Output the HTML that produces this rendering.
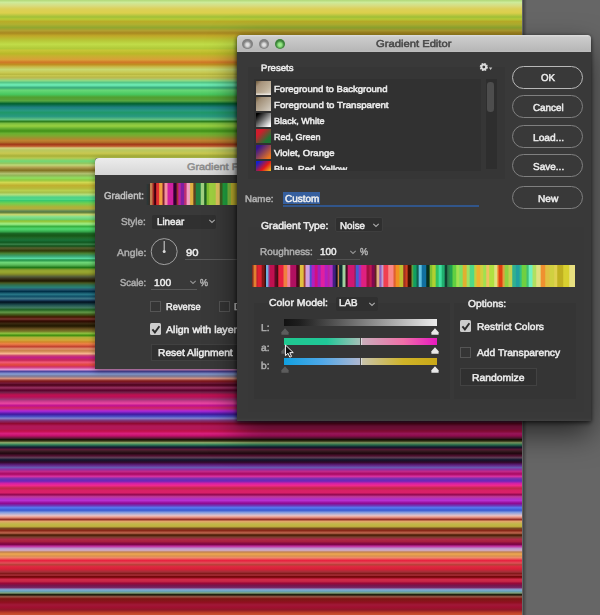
<!DOCTYPE html>
<html><head><meta charset="utf-8"><title>Gradient Editor</title>
<style>
html,body{margin:0;padding:0;}
body{width:600px;height:615px;overflow:hidden;background:#666666;position:relative;font-family:"Liberation Sans",sans-serif;}
.t{position:absolute;white-space:nowrap;line-height:1;transform-origin:0 50%;font-size:10px;-webkit-text-stroke:0.5px currentColor;text-rendering:geometricPrecision;}
#ui{position:absolute;left:0;top:0;width:600px;height:615px;filter:blur(0.5px);}
.abs{position:absolute;}
#stripes{position:absolute;left:0;top:0;width:522.4px;height:615px;background:linear-gradient(to bottom,#b0d878 0px,#cdeb9a 2.4px,#d8dc80 5.7px,#dcd058 9px,#dcd04c 13px,#a0c038 17px,#b8cc38 19px,#b8ac28 21.5px,#b0b030 24.4px,#90a830 27.6px,#b0a030 30.5px,#a88820 33px,#c0a828 35.8px,#b8c838 40.6px,#c0dc48 44.3px,#b0c838 48.8px,#c8c838 50px,#b8b828 53.7px,#c8b030 56px,#d8a038 59.8px,#d07828 62.2px,#c09020 64.6px,#c8b848 66.7px,#c8d870 69.5px,#c8c850 72.8px,#b8b840 74.4px,#c8c850 75.6px,#b8b848 77.2px,#b8c060 78.5px,#90d880 80.5px,#58c888 82.5px,#70f0b8 85px,#38a878 87.8px,#68d878 90.2px,#48c860 94.3px,#50a030 97.2px,#58a038 99.6px,#58a840 100.8px,#006030 103.7px,#208080 107.3px,#289880 110.6px,#209868 112.6px,#289880 116.3px,#60c080 119.5px,#308020 121.5px,#80c040 123.6px,#98d040 126px,#68b030 128.5px,#409018 131px,#68b030 133.3px,#80a830 135.8px,#a09030 138.2px,#c08030 140.7px,#b07028 142.3px,#a03818 144.3px,#c06030 146.3px,#d8d080 148px,#b8c860 150px,#c8c850 153.3px,#a8b038 156px,#b8c850 158px,#70d878 161px,#90c860 163.4px,#c0d878 165px,#b0a050 167.5px,#807020 170.3px,#b0c070 173.6px,#90b858 175.6px,#90e060 178px,#90c840 180px,#d0d850 182.5px,#c0b030 185.4px,#b8b838 188.2px,#b8d050 190.6px,#a8c048 192.3px,#b0e080 194.7px,#50d088 197.2px,#50d888 199.6px,#38c870 200.5px,#70d050 203.3px,#b0b038 207px,#b0b040 209px,#608858 211px,#587838 212.2px,#c8d870 214.6px,#80e090 217px,#68d070 219.5px,#90c030 221px,#a0f088 224px,#38b040 226.4px,#50d870 228.9px,#38b050 231.3px,#186020 233.7px,#185818 235.8px,#206828 237.8px,#187038 240.2px,#105820 242.3px,#388048 244.3px,#105018 246px,#586030 248px,#303808 250.8px,#488030 253.3px,#38a070 256px,#58d8a0 258.5px,#209048 260px,#70d878 262.6px,#58b858 265px,#207818 267.5px,#90a030 270px,#98a830 272px,#889028 274px,#505838 276.8px,#383018 278.9px,#201800 281px,#485820 283px,#307050 285px,#288078 287.4px,#285870 289.4px,#003048 291.5px,#287888 294.3px,#105068 296.3px,#407888 298.8px,#204868 300px,#001020 302px,#205050 305px,#407860 307.7px,#206020 309.8px,#609848 312.2px,#405818 314.6px,#401800 317px,#783830 319px,#300800 321px,#382810 323.6px,#201800 326px,#685020 328.9px,#787828 331.3px,#90c040 333.3px,#409010 335.4px,#b0b038 337.4px,#d0a838 340.2px,#d08828 341.9px,#f08048 343.9px,#c04030 346.7px,#e09070 348.8px,#c88048 350.8px,#f8b890 353.7px,#c84070 355.7px,#c02088 357.3px,#c82858 360.2px,#f05878 362.2px,#e04838 365px,#d03070 367px,#e090d0 369.5px,#5048a0 371.5px,#88a0d8 374px,#787898 376px,#d09080 378.5px,#801818 381px,#701838 383.3px,#480018 385px,#983060 387.8px,#580028 390.2px,#702048 392.3px,#c01050 395px,#b81058 397px,#a03878 399.6px,#c03888 400.8px,#e848a0 403.3px,#c01090 405.7px,#d02860 408px,#b028d8 411px,#4018a0 414.2px,#4848c0 416.3px,#8080d0 418.3px,#803070 420.7px,#900830 423.6px,#b01858 426px,#b01858 428.9px,#c01048 431px,#d82080 433.7px,#c01068 435.8px,#601838 438.2px,#101000 439.8px,#505028 441.4px,#90b070 442.7px,#308058 444.7px,#101830 447.2px,#601838 449.6px,#402028 450.8px,#200810 453.3px,#501030 455.7px,#604058 457.7px,#101830 459.8px,#300828 462.2px,#602080 465px,#6858b0 467.5px,#9030a0 469.5px,#c02888 471.5px,#a80860 474px,#d830a0 476.4px,#7030b0 478.9px,#6828b8 481px,#d020a8 483.3px,#f02890 485.4px,#c02848 488.2px,#d82068 490.7px,#d82068 492.7px,#900850 494.7px,#c03898 496.7px,#b030c8 499.2px,#b830d0 500.5px,#900890 503.3px,#7030b0 505.3px,#5878f0 507.7px,#3858d0 510.2px,#88a0e0 512.6px,#e0c0c8 515.4px,#f0a090 517px,#983028 519.5px,#e0a868 521.5px,#c0b848 524px,#c0b040 526.4px,#784820 528.5px,#882818 530.5px,#c06850 533px,#401800 535px,#784030 537px,#b02848 539.4px,#a82040 541.5px,#780040 544.3px,#c030a0 546.3px,#c0a0d0 548.8px,#d0a8c0 550.4px,#c08050 552px,#f0a850 554px,#d89050 556px,#f08868 557.7px,#e82040 560.6px,#e05058 563px,#b84038 564.6px,#e02840 566.7px,#d82038 569px,#a03038 572px,#801818 573.6px,#a83038 575.2px,#680000 576.8px,#d02848 579.3px,#c82848 581.3px,#980838 583.3px,#701850 585.8px,#7a2868 587.8px,#8c8cc4 589px,#78a8d0 590.3px,#68a0b0 591.5px,#80a078 593px,#101000 594.7px,#985848 596.7px,#801010 598.8px,#801818 600px,#901020 602.4px,#a01838 604.8px,#a01030 607.3px,#901828 610px,#c04028 613px,#c85030 615px);}
</style></head><body>
<div id="stripes"></div>
<div class="abs" style="left:522.5px;top:0;width:4px;height:615px;background:linear-gradient(to right,rgba(0,0,0,.35),rgba(0,0,0,0));"></div>

<div id="ui">
<div class="abs" style="left:94.5px;top:157.7px;width:200px;height:211.4px;background:#393939;box-shadow:0 2px 6px rgba(0,0,0,.4);border-radius:3px 3px 0 0;">
<div class="abs" style="left:0;top:0;width:100%;height:17px;background:linear-gradient(#ececec,#d6d6d6);border-radius:4px 4px 0 0;"></div>
</div>
<div class="" style="position:absolute;left:145.6px;top:183.6px;width:4.2px;height:21.8px;background:linear-gradient(to right,rgba(40,52,52,0),#2a3636 40%,#3a2c24);"></div>
<div class="" style="position:absolute;left:149.7px;top:183.4px;width:88px;height:22px;background:linear-gradient(to right,#c08050 0.4px,#c08050 1.9px,#a02020 3.1px,#a02020 3.5px,#400010 4.7px,#400010 5.5px,#e03030 6.7px,#e03030 8.5px,#f0a040 9.7px,#f0a040 11.9px,#802030 13.1px,#802030 13.9px,#f090a0 15.1px,#f090a0 16.9px,#d020a0 18.1px,#d020a0 22.7px,#300030 23.9px,#300030 26.0px,#a03030 27.2px,#a03030 27.7px,#c020a0 28.9px,#c020a0 30.2px,#8020a0 31.4px,#8020a0 33.5px,#c03070 34.7px,#c03070 36.0px,#f0a0c0 37.2px,#f0a0c0 39.4px,#e0b040 40.6px,#e0b040 42.7px,#604020 43.9px,#604020 45.2px,#208040 46.4px,#208040 50.2px,#a0d080 51.4px,#a0d080 53.5px,#206020 54.7px,#206020 56.0px,#80c030 57.2px,#80c030 58.5px,#a0d040 59.7px,#a0d040 65.2px,#e0c060 66.4px,#e0c060 69.2px,#406020 70.4px,#406020 71.9px,#20a040 73.1px,#20a040 76.9px,#80c040 78.1px,#80c040 80.2px,#c8b830 81.4px,#c8b830 86.9px);"></div>
<div class="" style="position:absolute;left:151.5px;top:214.5px;width:64px;height:14px;background:#303030;border-radius:2px;"></div>
<svg class="abs" style="left:207px;top:217px" width="10" height="8" viewBox="0 0 10 8"><path d="M2.3 2.9 L5 5.5 L7.7 2.9" stroke="#aaaaaa" stroke-width="1.15" fill="none"/></svg>
<svg class="abs" style="left:149px;top:236px" width="32" height="32" viewBox="0 0 32 32"><circle cx="15.2" cy="15.6" r="13" fill="none" stroke="#a0a0a0" stroke-width="1"/><path d="M15.2 15.6 L15.2 5" stroke="#c8c8c8" stroke-width="1.1"/><circle cx="15.2" cy="15.6" r="1.5" fill="#d8d8d8"/></svg>
<div class="" style="position:absolute;left:185px;top:259px;width:60px;height:1px;background:#5a5a5a;"></div>
<div class="" style="position:absolute;left:151px;top:288.5px;width:46px;height:1px;background:#5a5a5a;"></div>
<svg class="abs" style="left:188px;top:278px" width="10" height="8" viewBox="0 0 10 8"><path d="M2.3 2.9 L5 5.5 L7.7 2.9" stroke="#949494" stroke-width="1.15" fill="none"/></svg>
<div class="" style="position:absolute;left:150px;top:300.6px;width:9px;height:9.2px;border:1px solid #555555;background:#353535;"></div>
<div class="" style="position:absolute;left:218.5px;top:300.6px;width:9px;height:9.2px;border:1px solid #555555;background:#353535;"></div>
<div class="" style="position:absolute;left:149.8px;top:323.4px;width:11.4px;height:11.6px;background:#cdcdcd;border-radius:1.5px;"></div>
<svg class="abs" style="left:150px;top:323.5px" width="12" height="12" viewBox="0 0 12 12"><path d="M2.4 5.4 L4.9 8.4 L9.4 2.3" stroke="#2c2c2c" stroke-width="1.9" fill="none"/></svg>
<div class="" style="position:absolute;left:151px;top:344.3px;width:100px;height:17px;background:#303030;border:1px solid #414141;box-sizing:border-box;"></div>
<span class="t" style="left:186.9px;top:162.68px;font-size:9.6px;color:#8c8c8c;transform:scaleX(1.131)">Gradient Fill</span>
<span class="t" style="left:103.7px;top:192.44px;font-size:10px;color:#c0c0c0;transform:scaleX(0.972)">Gradient:</span>
<span class="t" style="left:121.0px;top:218.04px;font-size:10px;color:#adadad;transform:scaleX(0.991)">Style:</span>
<span class="t" style="left:157.0px;top:218.04px;font-size:10px;color:#ececec;transform:scaleX(0.978)">Linear</span>
<span class="t" style="left:116.5px;top:248.74px;font-size:10px;color:#adadad;transform:scaleX(1.033)">Angle:</span>
<span class="t" style="left:185.8px;top:248.74px;font-size:10px;color:#ececec;transform:scaleX(1.124)">90</span>
<span class="t" style="left:119.7px;top:279.44px;font-size:10px;color:#adadad;transform:scaleX(0.939)">Scale:</span>
<span class="t" style="left:153.8px;top:279.44px;font-size:10px;color:#ececec;transform:scaleX(1.025)">100</span>
<span class="t" style="left:200.2px;top:279.44px;font-size:10px;color:#adadad;transform:scaleX(0.898)">%</span>
<span class="t" style="left:165.8px;top:302.64px;font-size:10px;color:#ececec;transform:scaleX(0.932)">Reverse</span>
<span class="t" style="left:233.8px;top:302.64px;font-size:10px;color:#ececec;transform:scaleX(1.049)">Dither</span>
<span class="t" style="left:165.8px;top:325.84px;font-size:10px;color:#ececec;transform:scaleX(1.056)">Align with layer</span>
<span class="t" style="left:158.3px;top:349.04px;font-size:10px;color:#ececec;transform:scaleX(1.026)">Reset Alignment</span>
<div class="abs" style="left:237.4px;top:34.7px;width:354px;height:386.2px;background:#393939;box-shadow:0 13px 30px rgba(0,0,0,.6),0 1px 4px rgba(0,0,0,.6),-1px 3px 5px rgba(0,0,0,.25);border-radius:4px 4px 0 0;"></div>
<div class="" style="position:absolute;left:237.4px;top:34.7px;width:354px;height:17px;background:linear-gradient(#dedede 0,#cbcbcb 14%,#b8b8b8 88%,#bebebe 100%);border-radius:3.5px 3.5px 0 0;"></div>
<div class="" style="position:absolute;left:242.3px;top:38.5px;width:10.4px;height:10.4px;border-radius:50%;background:radial-gradient(circle at 50% 58%,#e6e6e6 0,#dadada 20%,#858585 48%,#7e7e7e 72%,#a0a0a0 90%,#bcbcbc 100%);"></div>
<div class="" style="position:absolute;left:258.8px;top:38.5px;width:10.4px;height:10.4px;border-radius:50%;background:radial-gradient(circle at 50% 58%,#e6e6e6 0,#dadada 20%,#858585 48%,#7e7e7e 72%,#a0a0a0 90%,#bcbcbc 100%);"></div>
<div class="" style="position:absolute;left:274.8px;top:38.5px;width:10.4px;height:10.4px;border-radius:50%;background:radial-gradient(circle at 50% 58%,#a0f090 0,#8ee07e 24%,#3c843a 52%,#3a8038 74%,#7ca07a 91%,#aabcaa 100%);"></div>
<div class="" style="position:absolute;left:248px;top:67px;width:257px;height:112px;background:#363636;"></div>
<div class="" style="position:absolute;left:253.7px;top:79px;width:243.3px;height:92.3px;background:#313131;"></div>
<div class="" style="position:absolute;left:481px;top:79px;width:16px;height:92.3px;background:#363636;"></div>
<div class="" style="position:absolute;left:485.5px;top:79px;width:11.5px;height:90px;background:#2e2e2e;"></div>
<div class="" style="position:absolute;left:487.4px;top:81.7px;width:7px;height:30px;background:#4d4d4d;border-radius:3.2px;"></div>
<svg class="abs" style="left:478px;top:61px" width="18" height="12" viewBox="0 0 18 12"><circle cx="5.8" cy="6" r="2.9" fill="none" stroke="#dcdcdc" stroke-width="2.3" stroke-dasharray="1.5 0.78"/><circle cx="5.8" cy="6" r="2.3" fill="none" stroke="#dcdcdc" stroke-width="1.7"/><path d="M10.9 6.6 L14.3 6.6 L12.6 9 Z" fill="#c4c4c4"/></svg>
<div class="" style="position:absolute;left:256.1px;top:80.8px;width:15px;height:14.6px;background:linear-gradient(to bottom,rgba(255,255,255,0) 78%,rgba(255,255,255,.55) 92%),linear-gradient(135deg,#6c5838 0%,#a6927a 22%,#c0b29c 64%,#dcd4c8 100%);background-size:15px 14.6px;"></div>
<div class="" style="position:absolute;left:256.1px;top:96.8px;width:15px;height:14.6px;background:linear-gradient(135deg,#6c5838 0%,#a08e76 22%,#bcb09e 62%,#d8d2c8 100%);background-size:15px 14.6px;"></div>
<div class="" style="position:absolute;left:256.1px;top:112.8px;width:15px;height:14.6px;background:linear-gradient(135deg,#000 10%,#fff 90%);background-size:15px 14.6px;"></div>
<div class="" style="position:absolute;left:256.1px;top:128.8px;width:15px;height:14.6px;background:linear-gradient(135deg,#d01c2c 25%,#207434 75%);background-size:15px 14.6px;"></div>
<div class="" style="position:absolute;left:256.1px;top:144.8px;width:15px;height:14.6px;background:linear-gradient(135deg,#34148c 15%,#e87420 85%);background-size:15px 14.6px;"></div>
<div class="" style="position:absolute;left:256.1px;top:160.8px;width:15px;height:9.8px;background:linear-gradient(135deg,#1020d0 10%,#e01818 50%,#f0e020 90%);background-size:15px 14.6px;"></div>
<div class="" style="position:absolute;left:237.4px;top:418px;width:354px;height:2.9px;background:linear-gradient(rgba(255,255,255,0),rgba(255,255,255,.035));"></div>
<div class="" style="position:absolute;left:248px;top:227px;width:336px;height:185px;background:#383838;"></div>
<div class="" style="position:absolute;left:254px;top:303px;width:195.6px;height:95.5px;background:#353535;"></div>
<div class="" style="position:absolute;left:454.2px;top:303px;width:122px;height:95.5px;background:#353535;"></div>
<div class="" style="position:absolute;left:283px;top:192.2px;width:37px;height:11.8px;background:#365f9e;"></div>
<div class="" style="position:absolute;left:283px;top:205.4px;width:196px;height:1.4px;background:#31558a;"></div>
<div class="" style="position:absolute;left:335.3px;top:216.8px;width:47.5px;height:14.8px;background:#2f2f2f;border:1px solid #3e3e3e;box-sizing:border-box;border-radius:2px;"></div>
<svg class="abs" style="left:371px;top:221px" width="10" height="8" viewBox="0 0 10 8"><path d="M2.3 2.9 L5 5.5 L7.7 2.9" stroke="#aaaaaa" stroke-width="1.15" fill="none"/></svg>
<div class="" style="position:absolute;left:317px;top:258.8px;width:43px;height:1.4px;background:#525252;"></div>
<svg class="abs" style="left:348px;top:248px" width="10" height="8" viewBox="0 0 10 8"><path d="M2.3 2.9 L5 5.5 L7.7 2.9" stroke="#949494" stroke-width="1.15" fill="none"/></svg>
<div class="" style="position:absolute;left:252.3px;top:264.8px;width:322.9px;height:22.7px;background:linear-gradient(to right,#803020 0.5px,#803020 1.0px,#e08030 2.1px,#e08030 3.9px,#c02030 4.9px,#c02030 5.3px,#e02030 6.3px,#e02030 9.1px,#801818 10.3px,#801818 12.1px,#301010 13.1px,#301010 13.5px,#70b0e0 14.5px,#70b0e0 15.9px,#a03080 16.9px,#a03080 17.3px,#c01050 18.3px,#c01050 21.9px,#600828 23.1px,#600828 24.1px,#401010 25.2px,#401010 25.7px,#e82040 26.8px,#e82040 30.9px,#f08040 32.1px,#f08040 34.6px,#f080a0 35.8px,#f080a0 37.6px,#b01060 38.8px,#b01060 43.6px,#500020 44.8px,#500020 45.9px,#402010 46.9px,#402010 47.3px,#e0c040 48.3px,#e0c040 51.1px,#a04030 52.3px,#a04030 52.9px,#d0a0e0 54.1px,#d0a0e0 57.1px,#5050d0 58.3px,#5050d0 59.1px,#b020c0 60.3px,#b020c0 62.1px,#d01080 63.3px,#d01080 65.1px,#a020c0 66.3px,#a020c0 68.1px,#e020a0 69.3px,#e020a0 72.1px,#b020c0 73.3px,#b020c0 75.1px,#c020a0 76.3px,#c020a0 77.1px,#b030c0 78.3px,#b030c0 80.1px,#402080 81.3px,#402080 83.1px,#101020 84.3px,#101020 85.1px,#c08040 86.2px,#c08040 86.5px,#103030 87.6px,#103030 89.9px,#a0d0a0 91.1px,#a0d0a0 92.9px,#401020 94.1px,#401020 95.1px,#d01870 96.3px,#d01870 101.9px,#902060 102.9px,#902060 103.3px,#4060d0 104.3px,#4060d0 106.1px,#a030c0 107.3px,#a030c0 108.6px,#e02080 109.8px,#e02080 113.9px,#a01040 115.1px,#a01040 116.9px,#c01850 118.1px,#c01850 119.1px,#800850 120.3px,#800850 122.1px,#602020 123.3px,#602020 123.9px,#e0b080 125.1px,#e0b080 126.6px,#9060c0 127.8px,#9060c0 128.9px,#c0a0d0 130.1px,#c0a0d0 130.8px,#f04050 132.0px,#f04050 135.6px,#f88888 136.8px,#f88888 140.9px,#e06030 142.1px,#e06030 143.1px,#f09020 144.3px,#f09020 146.9px,#c0c030 148.1px,#c0c030 150.6px,#a03020 151.8px,#a03020 152.9px,#d04020 154.1px,#d04020 155.1px,#401000 156.3px,#401000 158.9px,#60a040 160.1px,#60a040 160.6px,#10a060 161.8px,#10a060 163.9px,#106050 165.1px,#106050 166.1px,#60c0e0 167.3px,#60c0e0 169.1px,#1070a0 170.3px,#1070a0 173.6px,#083020 174.8px,#083020 177.1px,#80c030 178.3px,#80c030 179.6px,#b0d030 180.8px,#b0d030 183.1px,#30c060 184.3px,#30c060 186.1px,#40e0a0 187.3px,#40e0a0 189.1px,#20b070 190.3px,#20b070 192.1px,#104030 193.3px,#104030 194.6px,#308050 195.8px,#308050 196.9px,#20a050 198.1px,#20a050 199.9px,#60d040 201.1px,#60d040 203.6px,#a0e050 204.8px,#a0e050 206.6px,#80e060 207.8px,#80e060 210.1px,#e0b030 211.3px,#e0b030 214.1px,#a0e060 215.3px,#a0e060 217.1px,#50d888 218.3px,#50d888 221.6px,#c0d040 222.8px,#c0d040 223.9px,#f0b030 225.1px,#f0b030 227.6px,#d0d040 228.8px,#d0d040 230.6px,#a0e050 231.8px,#a0e050 233.6px,#f0c060 234.8px,#f0c060 236.6px,#b0e040 237.8px,#b0e040 241.6px,#e0e080 242.8px,#e0e080 244.6px,#f0a040 245.6px,#f0a040 246.0px,#e04010 247.0px,#e04010 249.9px,#e0a040 251.1px,#e0a040 252.1px,#90d040 253.3px,#90d040 255.9px,#c0d050 257.1px,#c0d050 259.6px,#30b090 260.8px,#30b090 263.3px,#20a0a0 264.5px,#20a0a0 267.1px,#30c080 268.3px,#30c080 269.1px,#70d040 270.3px,#70d040 273.9px,#40c070 275.1px,#40c070 276.1px,#70f0c0 277.3px,#70f0c0 279.9px,#b0e060 281.1px,#b0e060 283.6px,#e0e080 284.8px,#e0e080 288.1px,#f09030 289.3px,#f09030 292.6px,#e0c040 293.8px,#e0c040 297.1px,#d0d040 298.3px,#d0d040 301.6px,#e0d050 302.8px,#e0d050 304.6px,#c0b020 305.8px,#c0b020 310.6px,#d8d030 311.8px,#d8d030 316.6px,#e8e080 317.8px,#e8e080 322.1px);"></div>
<div class="" style="position:absolute;left:335.5px;top:296.5px;width:42px;height:14px;background:#303030;border-radius:2px;"></div>
<svg class="abs" style="left:367px;top:300px" width="10" height="8" viewBox="0 0 10 8"><path d="M2.3 2.9 L5 5.5 L7.7 2.9" stroke="#aaaaaa" stroke-width="1.15" fill="none"/></svg>
<div class="" style="position:absolute;left:284.3px;top:319.4px;width:152.7px;height:6.8px;background:linear-gradient(to right,#121212 0,#1e1e1e 10%,#7a7a7a 50%,#ececec 100%);"></div>
<div class="" style="position:absolute;left:284.3px;top:338.1px;width:152.7px;height:7.1px;background:linear-gradient(to right,#20c890 0,#20c898 28%,#a8c0b8 50%,#c8b0bc 50.2%,#f070a8 78%,#e818c0 100%);"></div>
<div class="" style="position:absolute;left:284.3px;top:357.6px;width:152.7px;height:7px;background:linear-gradient(to right,#10a0e0 0,#50a8e8 25%,#b0b8d0 50%,#c8c4b0 50.2%,#d0b428 78%,#c8a818 100%);"></div>
<div class="" style="position:absolute;left:360.3px;top:338.1px;width:0.8px;height:7.1px;background:#505050;"></div>
<div class="" style="position:absolute;left:361.1px;top:338.1px;width:1px;height:7.1px;background:#dcdcdc;"></div>
<div class="" style="position:absolute;left:360.3px;top:357.6px;width:0.8px;height:7.1px;background:#505050;"></div>
<div class="" style="position:absolute;left:361.1px;top:357.6px;width:1px;height:7.1px;background:#dcdcdc;"></div>
<svg class="abs" style="left:280.3px;top:327.8px" width="10" height="8" viewBox="0 0 10 8"><path d="M5 0.3 L8.6 4.2 L8.6 6.8 L1.4 6.8 L1.4 4.2 Z" fill="#5c5c5c"/></svg>
<svg class="abs" style="left:430px;top:327.8px" width="10" height="8" viewBox="0 0 10 8"><path d="M5 0.3 L8.6 4.2 L8.6 6.8 L1.4 6.8 L1.4 4.2 Z" fill="#e8e8e8"/></svg>
<svg class="abs" style="left:280.3px;top:346.8px" width="10" height="8" viewBox="0 0 10 8"><path d="M5 0.3 L8.6 4.2 L8.6 6.8 L1.4 6.8 L1.4 4.2 Z" fill="#5c5c5c"/></svg>
<svg class="abs" style="left:430px;top:346.8px" width="10" height="8" viewBox="0 0 10 8"><path d="M5 0.3 L8.6 4.2 L8.6 6.8 L1.4 6.8 L1.4 4.2 Z" fill="#e8e8e8"/></svg>
<svg class="abs" style="left:280.3px;top:366.2px" width="10" height="8" viewBox="0 0 10 8"><path d="M5 0.3 L8.6 4.2 L8.6 6.8 L1.4 6.8 L1.4 4.2 Z" fill="#5c5c5c"/></svg>
<svg class="abs" style="left:430px;top:366.2px" width="10" height="8" viewBox="0 0 10 8"><path d="M5 0.3 L8.6 4.2 L8.6 6.8 L1.4 6.8 L1.4 4.2 Z" fill="#e8e8e8"/></svg>
<div class="" style="position:absolute;left:459.8px;top:320.3px;width:11.6px;height:11.5px;background:#cdcdcd;border-radius:1.5px;"></div>
<svg class="abs" style="left:460px;top:320.5px" width="12" height="12" viewBox="0 0 12 12"><path d="M2.4 5.4 L4.9 8.4 L9.4 2.3" stroke="#2c2c2c" stroke-width="1.9" fill="none"/></svg>
<div class="" style="position:absolute;left:460px;top:346.8px;width:9px;height:9.2px;border:1px solid #555555;background:#353535;"></div>
<div class="" style="position:absolute;left:460.3px;top:368px;width:76.7px;height:17.5px;background:#303030;border:1px solid #424242;box-sizing:border-box;"></div>
<div class="" style="position:absolute;left:511.8px;top:65.8px;width:71.7px;height:23.4px;border:1.6px solid #b8b8b8;border-radius:12px;box-sizing:border-box;"></div>
<div class="" style="position:absolute;left:511.8px;top:95.1px;width:71.7px;height:23.4px;border:1.35px solid #808080;border-radius:12px;box-sizing:border-box;"></div>
<div class="" style="position:absolute;left:511.8px;top:124.6px;width:71.7px;height:23.4px;border:1.35px solid #808080;border-radius:12px;box-sizing:border-box;"></div>
<div class="" style="position:absolute;left:511.8px;top:154.1px;width:71.7px;height:23.4px;border:1.35px solid #808080;border-radius:12px;box-sizing:border-box;"></div>
<div class="" style="position:absolute;left:511.8px;top:185.6px;width:71.7px;height:23.4px;border:1.35px solid #808080;border-radius:12px;box-sizing:border-box;"></div>
<span class="t" style="left:375.8px;top:40.04px;font-size:10px;color:#484848;transform:scaleX(1.122)">Gradient Editor</span>
<span class="t" style="left:260.8px;top:64.22px;font-size:9.2px;color:#ececec;transform:scaleX(1.043)">Presets</span>
<span class="t" style="left:274.0px;top:84.74px;font-size:8.7px;color:#ececec;transform:scaleX(1.098)">Foreground to Background</span>
<span class="t" style="left:274.0px;top:100.74px;font-size:8.7px;color:#ececec;transform:scaleX(1.108)">Foreground to Transparent</span>
<span class="t" style="left:274.0px;top:116.74px;font-size:8.7px;color:#ececec;transform:scaleX(1.046)">Black, White</span>
<span class="t" style="left:274.0px;top:132.74px;font-size:8.7px;color:#ececec;transform:scaleX(1.035)">Red, Green</span>
<span class="t" style="left:274.0px;top:148.74px;font-size:8.7px;color:#ececec;transform:scaleX(1.092)">Violet, Orange</span>
<div class="abs" style="left:0;top:0;width:600px;height:170.3px;overflow:hidden"><span class="t" style="left:274.0px;top:164.74px;font-size:8.7px;color:#ececec;transform:scaleX(1.079)">Blue, Red, Yellow</span></div>
<span class="t" style="left:245.0px;top:194.35px;font-size:9.4px;color:#b0b0b0;transform:scaleX(1.032)">Name:</span>
<span class="t" style="left:284.7px;top:194.84px;font-size:10px;color:#f0f0f0;transform:scaleX(0.996)">Custom</span>
<span class="t" style="left:260.9px;top:221.54px;font-size:10px;color:#ececec;transform:scaleX(1.030)">Gradient Type:</span>
<span class="t" style="left:339.5px;top:221.54px;font-size:10px;color:#ececec;transform:scaleX(0.977)">Noise</span>
<span class="t" style="left:259.5px;top:248.04px;font-size:10px;color:#adadad;transform:scaleX(0.989)">Roughness:</span>
<span class="t" style="left:320.3px;top:248.04px;font-size:10px;color:#ececec;transform:scaleX(0.995)">100</span>
<span class="t" style="left:360.3px;top:248.04px;font-size:10px;color:#adadad;transform:scaleX(0.898)">%</span>
<span class="t" style="left:269.0px;top:299.14px;font-size:10px;color:#ececec;transform:scaleX(1.041)">Color Model:</span>
<span class="t" style="left:339.0px;top:299.14px;font-size:10px;color:#ececec;transform:scaleX(0.979)">LAB</span>
<span class="t" style="left:260.8px;top:323.84px;font-size:10px;color:#adadad;transform:scaleX(1.019)">L:</span>
<span class="t" style="left:260.8px;top:344.34px;font-size:10px;color:#adadad;transform:scaleX(1.019)">a:</span>
<span class="t" style="left:260.8px;top:361.74px;font-size:10px;color:#adadad;transform:scaleX(1.019)">b:</span>
<span class="t" style="left:468.4px;top:300.04px;font-size:10px;color:#ececec;transform:scaleX(1.023)">Options:</span>
<span class="t" style="left:476.5px;top:322.54px;font-size:10px;color:#ececec;transform:scaleX(1.020)">Restrict Colors</span>
<span class="t" style="left:476.5px;top:348.94px;font-size:10px;color:#ececec;transform:scaleX(1.024)">Add Transparency</span>
<span class="t" style="left:472.0px;top:374.14px;font-size:10px;color:#ececec;transform:scaleX(1.038)">Randomize</span>
<span class="t" style="left:541.0px;top:74.14px;font-size:10px;color:#ececec;transform:scaleX(0.969)">OK</span>
<span class="t" style="left:532.5px;top:103.84px;font-size:10px;color:#ececec;transform:scaleX(0.986)">Cancel</span>
<span class="t" style="left:532.5px;top:134.34px;font-size:10px;color:#ececec;transform:scaleX(1.020)">Load...</span>
<span class="t" style="left:532.5px;top:162.54px;font-size:10px;color:#ececec;transform:scaleX(1.002)">Save...</span>
<span class="t" style="left:538.0px;top:195.24px;font-size:10px;color:#ececec;transform:scaleX(1.014)">New</span>
<svg class="abs" style="left:284.3px;top:343.8px" width="11.6" height="15.5" viewBox="0 0 12 16"><path d="M1.5 1 L1.5 12 L4.2 9.6 L6 13.6 L7.8 12.8 L6 8.9 L9.6 8.9 Z" fill="#111" stroke="#fff" stroke-width="1"/></svg>
</div>
</body></html>
